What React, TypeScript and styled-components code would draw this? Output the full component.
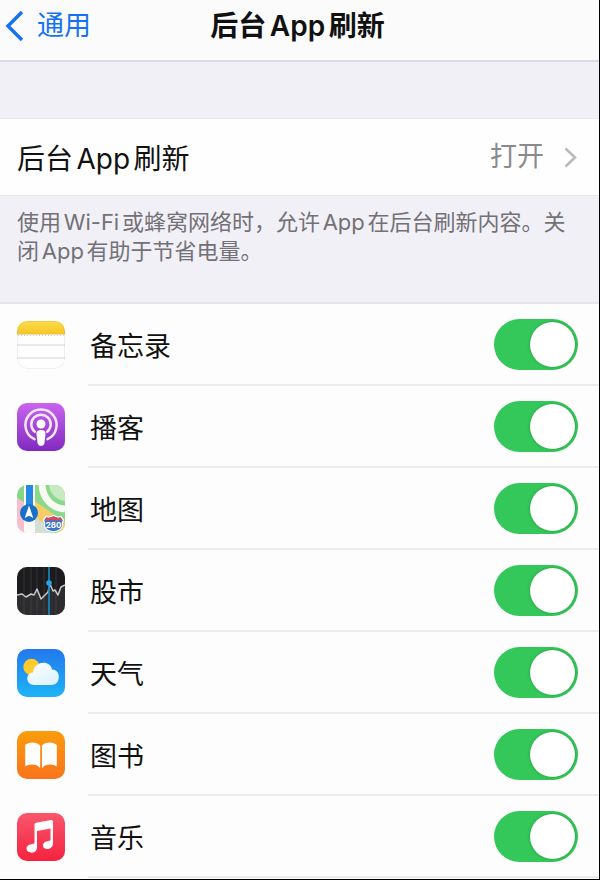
import React, { useId, useState } from "react";
import styled, { createGlobalStyle } from "styled-components";

const GlobalStyle = createGlobalStyle`
  *, *::before, *::after { box-sizing: border-box; }
  body {
    margin: 0;
    background: #fdfdfd;
    color: #111;
    font-family: Inter, "Noto Sans CJK SC", sans-serif;
    text-autospace: normal;
  }
`;

const Page = styled.div`
  display: flex;
  flex-direction: column;
  min-height: 100vh;
  background: #fdfdfd;
  border-right: 1px solid #000;
  border-bottom: 1px solid #000;
`;

const NavBar = styled.header`
  display: grid;
  grid-template-columns: 1fr auto 1fr;
  align-items: center;
  height: 62px;
  padding: 0 9px 9px 5px;
  background: #fbfbfc;
  border-bottom: 2px solid #dcdbe0;
`;

const BackLink = styled.a`
  display: flex;
  align-items: center;
  gap: 13px;
  color: #1672f3;
  font-size: 27px;
  line-height: 40px;
  text-decoration: none;
`;

const Title = styled.h1`
  margin: 0;
  font-size: 28px;
  line-height: 40px;
  font-weight: 600;
`;

const Main = styled.main`
  flex: 1;
  display: flex;
  flex-direction: column;
  background: #f2f0f7;
  padding-top: 56px;
`;

const MasterRow = styled.button`
  display: flex;
  align-items: center;
  width: 100%;
  height: 78px;
  padding: 0 22px 0 17px;
  border: solid #e6e5eb;
  border-width: 1px 0;
  background: #fefefe;
  color: inherit;
  font: inherit;
  font-size: 27px;
  line-height: 40px;
  text-align: left;
`;

const MasterLabel = styled.span`
  flex: 1;
  padding-top: 4px;
  font-size: 28px;
`;

const MasterValue = styled.span`
  margin-right: 20px;
  color: #8b8b8d;
`;

const Note = styled.p`
  margin: 0;
  padding: 12px 28px 36px 17px;
  color: #727176;
  font-size: 22px;
  line-height: 29px;
`;

const AppList = styled.ul`
  flex: 1;
  margin: 0;
  padding: 0;
  list-style: none;
  background: #fdfdfd;
  border-top: 2px solid #e6e5eb;
`;

const AppItem = styled.li`
  display: flex;
  align-items: center;
  gap: 23px;
  height: 82px;
  padding-left: 17px;
`;

const AppIcon = styled.svg`
  flex: none;
  display: block;
  width: 48px;
  height: 48px;
  border-radius: 10px;
`;

const AppBody = styled.div`
  flex: 1;
  display: flex;
  align-items: center;
  justify-content: space-between;
  height: 100%;
  padding: 0 21px 0 2px;
  border-bottom: 2px solid #ececee;
`;

const AppLabel = styled.label`
  padding-top: 5px;
  font-size: 27px;
  line-height: 40px;
`;

const Switch = styled.input`
  appearance: none;
  display: flex;
  align-items: center;
  flex: none;
  width: 84px;
  height: 51px;
  margin: 0;
  padding: 0 3px;
  border-radius: 26px;
  background: #e4e4e8;
  cursor: pointer;

  &::before {
    content: "";
    width: 45px;
    height: 45px;
    border-radius: 50%;
    background: #fff;
    box-shadow: 0 0 3px rgba(0, 60, 10, 0.35);
  }

  &:checked {
    justify-content: flex-end;
    background: #34c759;
  }
`;

const NotesIcon = () => (
  <AppIcon viewBox="0 0 48 48" aria-hidden="true">
    <defs>
      <linearGradient id="notes" x1="0" y1="0" x2="0" y2="1">
        <stop offset="0" stopColor="#fbdc4b" />
        <stop offset="1" stopColor="#f7c625" />
      </linearGradient>
    </defs>
    <rect width="48" height="48" fill="#fefefe" />
    <rect width="48" height="13" fill="url(#notes)" />
    <path d="M1 14.5H47" stroke="#c9c9c9" strokeDasharray="1 2" />
    <path d="M0 13.3H48" stroke="#d8ba55" strokeWidth=".6" />
    <path d="M0 24H48M0 37H48" stroke="#d4d4d6" strokeWidth="1.2" />
    <rect x=".5" y=".5" width="47" height="47" rx="10" fill="none" stroke="#000" strokeOpacity=".06" />
  </AppIcon>
);

const PodcastsIcon = () => (
  <AppIcon viewBox="0 0 48 48" aria-hidden="true">
    <defs>
      <linearGradient id="podcasts" x1="0" y1="0" x2="0" y2="1">
        <stop offset="0" stopColor="#c965ee" />
        <stop offset="1" stopColor="#8129bf" />
      </linearGradient>
    </defs>
    <rect width="48" height="48" fill="url(#podcasts)" />
    <g fill="none" stroke="#f7e6ff" strokeWidth="2.5" strokeLinecap="round">
      <path d="M17.5 36.2A15.6 15.6 0 1 1 30.5 36.2" />
      <path d="M17.8 28.8A9.7 9.7 0 1 1 30.2 28.8" />
    </g>
    <circle cx="24" cy="21" r="4.5" fill="#fff" />
    <path d="M19.4 30.5C19.4 28 21.2 27 24 27S28.6 28 28.6 30.5L27.4 40.2C27 43.6 21 43.6 20.6 40.2Z" fill="#fff" />
  </AppIcon>
);

const MapsIcon = () => (
  <AppIcon viewBox="0 0 48 48" aria-hidden="true">
    <rect width="48" height="48" fill="#f4f2ed" />
    <path d="M0 0H9V19L0 13Z" fill="#85d58a" />
    <path d="M0 13L9 19V48H0Z" fill="#f7bfcc" />
    <path d="M16 0H48V48H16Z" fill="#8ad889" />
    <path d="M16 15L48 37V48H41L16 31Z" fill="#f8cd68" />
    <path d="M16 31L34 43V48H16Z" fill="#d6dfd3" />
    <path d="M25 0C26 14 35 23 48 24" fill="none" stroke="#f8faf4" strokeWidth="7" />
    <path d="M32 0C33 9 39 15 48 16V0Z" fill="#c7eac2" />
    <rect x="7" width="11" height="48" fill="#fbfaf8" />
    <rect x="9" width="7" height="29" fill="#2589e3" />
    <circle cx="12" cy="28" r="9" fill="#1970cb" />
    <path d="M12 20.5L16.3 33L12 30.8L7.7 33Z" fill="#fff" />
    <path d="M29 31.5Q32 33 36.500 30.500Q41 33 44 31.500L46.500 35Q44.500 38 45.500 41Q45 45 36.500 47Q28 45 27.500 41Q28.500 38 26.500 35Z" fill="#3979c9" stroke="#f7fbff" strokeWidth="1.3" />
    <path d="M29.2 32.500Q32 33.800 36.500 31.500Q41 33.800 43.800 32.500L45.300 35.500H27.700Z" fill="#d9475b" />
    <text x="36.5" y="43" textAnchor="middle" fontFamily="Inter, sans-serif" fontSize="8" fontWeight="700" fill="#fff">280</text>
  </AppIcon>
);

const StocksIcon = () => (
  <AppIcon viewBox="0 0 48 48" aria-hidden="true">
    <rect width="48" height="48" fill="#1c1c1e" />
    <path d="M7 0V48M14 0V48M20 0V48M27 0V48M39 0V48" stroke="#353538" strokeWidth="1" />
    <path d="M0 28L5 27L9 30L14 27L17 28L20 22L24 32L28 28L31 25L33 17L36 24L38 23L41 28L44 20L48 18V48H0Z" fill="#55555a" opacity=".3" />
    <path d="M0 28L5 27L9 30L14 27L17 28L20 22L24 32L28 28L31 25L33 17L36 24L38 23L41 28L44 20L48 18" fill="none" stroke="#c9c9cb" strokeWidth="1.5" strokeLinejoin="round" />
    <path d="M32 0V48" stroke="#1688c0" strokeWidth="1.7" />
    <circle cx="32" cy="16" r="2.8" fill="#24a4e2" />
  </AppIcon>
);

const WeatherIcon = () => (
  <AppIcon viewBox="0 0 48 48" aria-hidden="true">
    <defs>
      <linearGradient id="weather" x1="0" y1="0" x2="0" y2="1">
        <stop offset="0" stopColor="#2378ed" />
        <stop offset="1" stopColor="#1eb4f5" />
      </linearGradient>
      <linearGradient id="cloud" x1="0" y1="0" x2="1" y2="1">
        <stop offset="0" stopColor="#fff" />
        <stop offset="1" stopColor="#d9f1fd" />
      </linearGradient>
    </defs>
    <rect width="48" height="48" fill="url(#weather)" />
    <circle cx="14.5" cy="18" r="8.2" fill="#fdcb2e" />
    <path d="M17.5 36C8.500 36 8 24 16 23.500C17 11.500 33.500 10.500 35 20.500C44 20 44.500 36 34.500 36Z" fill="url(#cloud)" />
  </AppIcon>
);

const BooksIcon = () => (
  <AppIcon viewBox="0 0 48 48" aria-hidden="true">
    <defs>
      <linearGradient id="books" x1="0" y1="0" x2="0" y2="1">
        <stop offset="0" stopColor="#fa9d0b" />
        <stop offset="1" stopColor="#f9731c" />
      </linearGradient>
    </defs>
    <rect width="48" height="48" fill="url(#books)" />
    <path d="M23.200 14.500C20 10.500 11.500 10.500 8.200 14V35.500C12 32.500 19.500 32.500 23.200 37Z" fill="#fff" />
    <path d="M25 14.500C28.200 10.500 36.500 10.500 39.800 14V35.500C36 32.500 28.500 32.500 25 37Z" fill="#fff" />
  </AppIcon>
);

const MusicIcon = () => (
  <AppIcon viewBox="0 0 48 48" aria-hidden="true">
    <defs>
      <linearGradient id="music" x1="0" y1="0" x2="0" y2="1">
        <stop offset="0" stopColor="#f9576c" />
        <stop offset="1" stopColor="#f5223f" />
      </linearGradient>
    </defs>
    <rect width="48" height="48" fill="url(#music)" />
    <path d="M17.500 11.500Q17.500 10 19 9.700L34 7Q36 6.700 36 8.500V30.500C36 37 26 37.800 26 32.500C26 29 29 28.500 33.500 27.500V15.500L20 18V34.500C20 41.500 9.500 41 9.500 35.500C9.500 32 13 31.500 17.500 30.500Z" fill="#fff" />
  </AppIcon>
);

const apps = [
  { name: "备忘录", Icon: NotesIcon },
  { name: "播客", Icon: PodcastsIcon },
  { name: "地图", Icon: MapsIcon },
  { name: "股市", Icon: StocksIcon },
  { name: "天气", Icon: WeatherIcon },
  { name: "图书", Icon: BooksIcon },
  { name: "音乐", Icon: MusicIcon },
];

function AppRow({ name, Icon }: { name: string; Icon: React.ComponentType }) {
  const id = useId();
  const [on, setOn] = useState(true);
  return (
    <AppItem>
      <Icon />
      <AppBody>
        <AppLabel htmlFor={id}>{name}</AppLabel>
        <Switch id={id} type="checkbox" role="switch" checked={on} onChange={(e) => setOn(e.target.checked)} />
      </AppBody>
    </AppItem>
  );
}

export default function App() {
  return (
    <>
      <GlobalStyle />
      <Page>
        <NavBar>
          <BackLink href="#general">
            <svg width="19" height="32" viewBox="0 0 19 32" fill="none" aria-hidden="true">
              <path d="M17 2L3 16L17 30" stroke="currentColor" strokeWidth="3.500" />
            </svg>
            通用
          </BackLink>
          <Title>后台App刷新</Title>
        </NavBar>
        <Main>
          <MasterRow type="button">
            <MasterLabel>后台App刷新</MasterLabel>
            <MasterValue>打开</MasterValue>
            <svg width="13" height="21" viewBox="0 0 13 21" fill="none" aria-hidden="true">
              <path d="M1.500 1.500L11 10.500L1.500 19.500" stroke="#b9b9bb" strokeWidth="2.500" />
            </svg>
          </MasterRow>
          <Note>使用Wi-Fi或蜂窝网络时，允许App在后台刷新内容。关闭App有助于节省电量。</Note>
          <AppList>
            {apps.map((app) => (
              <AppRow key={app.name} {...app} />
            ))}
          </AppList>
        </Main>
      </Page>
    </>
  );
}
